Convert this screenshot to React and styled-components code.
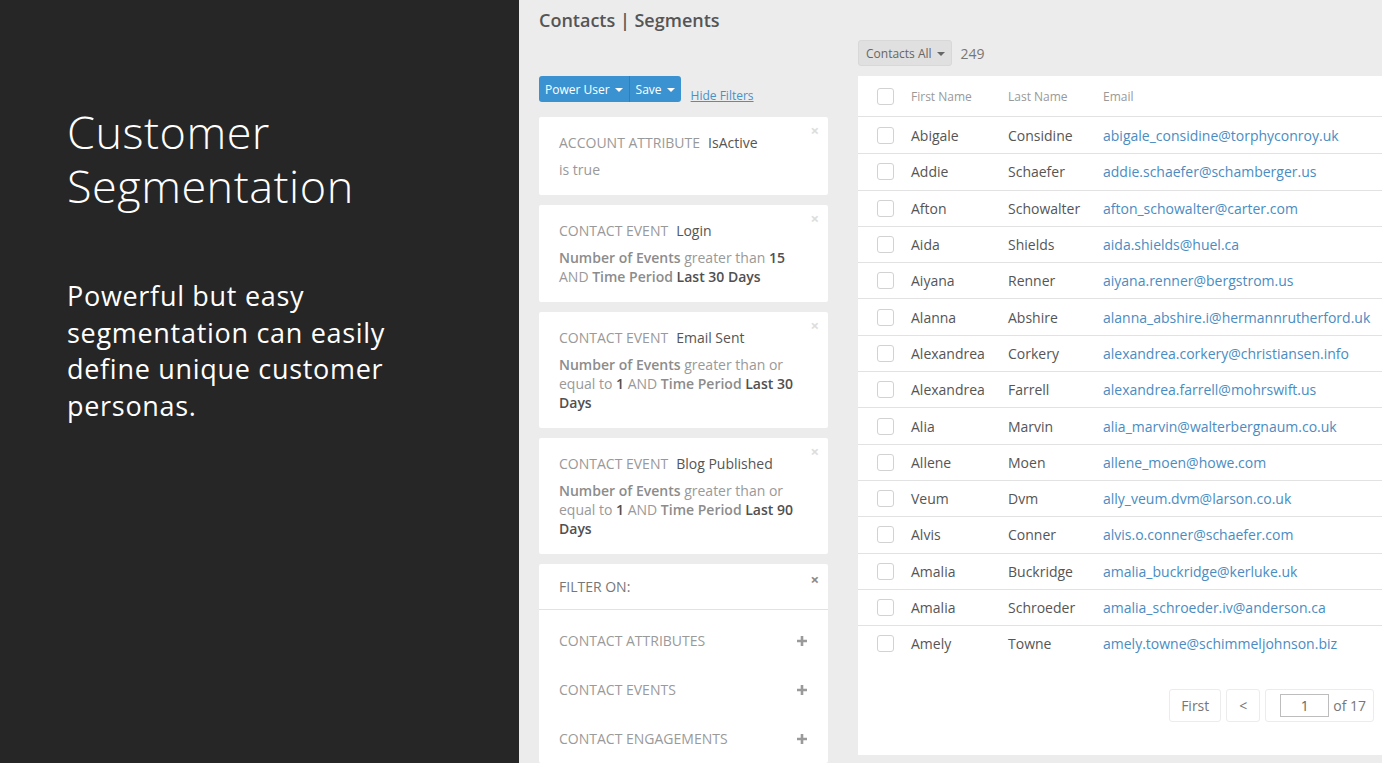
import React from 'react'
import styled, { createGlobalStyle } from 'styled-components'

const GlobalStyle = createGlobalStyle`
  html, body {
    margin: 0;
    padding: 0;
    overflow: hidden;
  }
  body {
    font-family: "Open Sans", "Noto Sans", sans-serif;
  }
  * {
    box-sizing: border-box;
  }
`

const conditions = [
  {
    kind: 'ACCOUNT ATTRIBUTE',
    name: 'IsActive',
    body: [['text', 'is true']],
  },
  {
    kind: 'CONTACT EVENT',
    name: 'Login',
    body: [
      ['field', 'Number of Events'],
      ['text', ' greater than '],
      ['value', '15'],
      ['text', ' AND '],
      ['field', 'Time Period'],
      ['text', ' '],
      ['value', 'Last 30 Days'],
    ],
  },
  {
    kind: 'CONTACT EVENT',
    name: 'Email Sent',
    body: [
      ['field', 'Number of Events'],
      ['text', ' greater than or equal to '],
      ['value', '1'],
      ['text', ' AND '],
      ['field', 'Time Period'],
      ['text', ' '],
      ['value', 'Last 30 Days'],
    ],
  },
  {
    kind: 'CONTACT EVENT',
    name: 'Blog Published',
    body: [
      ['field', 'Number of Events'],
      ['text', ' greater than or equal to '],
      ['value', '1'],
      ['text', ' AND '],
      ['field', 'Time Period'],
      ['text', ' '],
      ['value', 'Last 90 Days'],
    ],
  },
]

const filterGroups = ['CONTACT ATTRIBUTES', 'CONTACT EVENTS', 'CONTACT ENGAGEMENTS']

const contacts = [
  ['Abigale', 'Considine', 'abigale_considine@torphyconroy.uk'],
  ['Addie', 'Schaefer', 'addie.schaefer@schamberger.us'],
  ['Afton', 'Schowalter', 'afton_schowalter@carter.com'],
  ['Aida', 'Shields', 'aida.shields@huel.ca'],
  ['Aiyana', 'Renner', 'aiyana.renner@bergstrom.us'],
  ['Alanna', 'Abshire', 'alanna_abshire.i@hermannrutherford.uk'],
  ['Alexandrea', 'Corkery', 'alexandrea.corkery@christiansen.info'],
  ['Alexandrea', 'Farrell', 'alexandrea.farrell@mohrswift.us'],
  ['Alia', 'Marvin', 'alia_marvin@walterbergnaum.co.uk'],
  ['Allene', 'Moen', 'allene_moen@howe.com'],
  ['Veum', 'Dvm', 'ally_veum.dvm@larson.co.uk'],
  ['Alvis', 'Conner', 'alvis.o.conner@schaefer.com'],
  ['Amalia', 'Buckridge', 'amalia_buckridge@kerluke.uk'],
  ['Amalia', 'Schroeder', 'amalia_schroeder.iv@anderson.ca'],
  ['Amely', 'Towne', 'amely.towne@schimmeljohnson.biz'],
]

const App = () => {
  return (
    <>
      <GlobalStyle />
      <Page>
        <Slide>
          <SlideTitle>Customer Segmentation</SlideTitle>
          <SlideText>
            Powerful but easy segmentation can easily define unique customer personas.
          </SlideText>
        </Slide>

        <Workspace>
          <PageTitle>Contacts | Segments</PageTitle>
          <Columns>
            <FilterColumn>
              <Toolbar>
                <ButtonGroup>
                  <PrimaryButton>
                    Power User <Caret />
                  </PrimaryButton>
                  <PrimaryButton $divided>
                    Save <Caret />
                  </PrimaryButton>
                </ButtonGroup>
                <TextLink>Hide Filters</TextLink>
              </Toolbar>

              {conditions.map((c, i) => (
                <ConditionCard key={i}>
                  <CloseMark>×</CloseMark>
                  <ConditionTitle>
                    {c.kind}
                    <ConditionName>{c.name}</ConditionName>
                  </ConditionTitle>
                  <div>
                    {c.body.map(([type, text], j) => (
                      <Part key={j} $type={type}>
                        {text}
                      </Part>
                    ))}
                  </div>
                </ConditionCard>
              ))}

              <FilterCard>
                <FilterHeader>
                  FILTER ON:
                  <CloseMark $dark>×</CloseMark>
                </FilterHeader>
                <FilterList>
                  {filterGroups.map((g) => (
                    <FilterRow key={g}>
                      {g}
                      <PlusIcon viewBox="0 0 12 12">
                        <path d="M6 1v10M1 6h10" />
                      </PlusIcon>
                    </FilterRow>
                  ))}
                </FilterList>
              </FilterCard>
            </FilterColumn>

            <ResultsColumn>
              <ResultsBar>
                <GreyButton>
                  Contacts All <Caret $dark />
                </GreyButton>
                <Count>249</Count>
              </ResultsBar>

              <TableCard>
                <HeaderRow>
                  <Checkbox />
                  <span>First Name</span>
                  <span>Last Name</span>
                  <span>Email</span>
                </HeaderRow>
                {contacts.map(([first, last, email], i) => (
                  <DataRow key={i} $first={i === 0}>
                    <Checkbox />
                    <span>{first}</span>
                    <span>{last}</span>
                    <EmailLink>{email}</EmailLink>
                  </DataRow>
                ))}

                <Pager>
                  <PagerButton>First</PagerButton>
                  <PagerButton $narrow>&lt;</PagerButton>
                  <PagerBox>
                    <PageInput defaultValue="1" />
                    <span>of 17</span>
                  </PagerBox>
                </Pager>
              </TableCard>
            </ResultsColumn>
          </Columns>
        </Workspace>
      </Page>
    </>
  )
}

export default App


const Page = styled.div`
  display: flex;
  width: 100vw;
  height: 100vh;
  overflow: hidden;
`

const Slide = styled.div`
  flex: none;
  width: 519px;
  background: #262626;
  color: #ffffff;
  padding: 105px 0 0 67px;
  font-family: "Open Sans", "Noto Sans", sans-serif;
`

const SlideTitle = styled.h1`
  margin: 0;
  width: 360px;
  font-size: 45px;
  line-height: 54px;
  font-weight: 300;
  letter-spacing: 0.5px;
`

const SlideText = styled.p`
  margin: 65px 0 0;
  width: 350px;
  font-size: 27px;
  line-height: 36.5px;
  font-weight: 400;
  letter-spacing: 0.7px;
`

const Workspace = styled.div`
  flex: 1;
  background: #ececec;
  padding: 8px 0 0 20px;
  overflow: hidden;
`

const PageTitle = styled.h2`
  margin: 0;
  font-size: 18px;
  line-height: 24px;
  font-weight: 600;
  color: #555555;
`

const Columns = styled.div`
  display: flex;
  align-items: flex-start;
  gap: 30px;
  margin-top: 8px;
`

const FilterColumn = styled.div`
  flex: none;
  width: 289px;
  padding-top: 36px;
  display: flex;
  flex-direction: column;
  gap: 10px;
`

const Toolbar = styled.div`
  display: flex;
  align-items: flex-end;
  gap: 10px;
  margin-bottom: 5px;
`

const ButtonGroup = styled.div`
  display: flex;
  border-radius: 3px;
  overflow: hidden;
`

const PrimaryButton = styled.button`
  display: flex;
  align-items: center;
  height: 26px;
  padding: 0 6px;
  border: none;
  border-left: ${({ $divided }) => ($divided ? '1px solid #2f7fb8' : 'none')};
  background: #3a93d0;
  color: #ffffff;
  font-family: inherit;
  font-size: 12px;
  cursor: pointer;
`

const Caret = styled.span`
  display: inline-block;
  margin-left: 5px;
  margin-top: 1px;
  border-left: 4px solid transparent;
  border-right: 4px solid transparent;
  border-top: 4px solid ${({ $dark }) => ($dark ? '#666666' : '#ffffff')};
`

const TextLink = styled.a`
  font-size: 12px;
  color: #4a90c8;
  text-decoration: underline;
  line-height: 18px;
  margin-bottom: -3px;
  cursor: pointer;
`

const ConditionCard = styled.div`
  position: relative;
  background: #ffffff;
  border-radius: 2px;
  padding: 16px 20px 16px;
  font-size: 14px;
  line-height: 19px;
  color: #999999;
`

const CloseMark = styled.span`
  position: absolute;
  top: ${({ $dark }) => ($dark ? '7px' : '5px')};
  right: 9px;
  font-size: 15px;
  font-weight: 700;
  line-height: 16px;
  color: ${({ $dark }) => ($dark ? '#8a8a8a' : '#dddddd')};
`

const ConditionTitle = styled.div`
  margin-bottom: 8px;
`

const ConditionName = styled.span`
  margin-left: 8px;
  color: #555555;
`

const Part = styled.span`
  font-weight: ${({ $type }) => ($type === 'text' ? 400 : 600)};
  color: ${({ $type }) =>
    $type === 'field' ? '#8c8c8c' : $type === 'value' ? '#505050' : '#999999'};
  white-space: pre-wrap;
`

const FilterCard = styled.div`
  background: #ffffff;
  border-radius: 2px;
  font-size: 14px;
  line-height: 19px;
`

const FilterHeader = styled.div`
  position: relative;
  padding: 13px 20px;
  color: #777777;
  border-bottom: 1px solid #e2e2e2;
`

const FilterList = styled.div`
  padding-top: 6px;
`

const FilterRow = styled.div`
  display: flex;
  align-items: center;
  justify-content: space-between;
  height: 49px;
  padding: 0 20px;
  color: #9a9a9a;
`

const PlusIcon = styled.svg`
  width: 12px;
  height: 12px;
  stroke: #9a9a9a;
  stroke-width: 2.6;
  fill: none;
`

const ResultsColumn = styled.div`
  flex: none;
  width: 540px;
`

const ResultsBar = styled.div`
  display: flex;
  align-items: center;
  gap: 9px;
  height: 26px;
  margin-bottom: 10px;
`

const GreyButton = styled.button`
  display: flex;
  align-items: center;
  height: 26px;
  padding: 0 6px 0 7px;
  border: 1px solid #d8d8d8;
  border-radius: 3px;
  background: #e0e0e0;
  color: #666666;
  font-family: inherit;
  font-size: 12px;
`

const Count = styled.span`
  font-size: 14px;
  color: #777777;
`

const TableCard = styled.div`
  background: #ffffff;
  height: 679px;
  font-size: 14px;
  color: #555555;
`

const rowGrid = `
  display: grid;
  grid-template-columns: 34px 97px 95px 1fr;
  align-items: center;
  padding-left: 19px;
  white-space: nowrap;
`

const HeaderRow = styled.div`
  ${rowGrid}
  height: 41px;
  border-bottom: 1px solid #e2e2e2;
  font-size: 12px;
  color: #999999;
`

const DataRow = styled.div`
  ${rowGrid}
  height: 36.3px;
  border-top: ${({ $first }) => ($first ? 'none' : '1px solid #e2e2e2')};
`

const Checkbox = styled.span`
  display: block;
  width: 17px;
  height: 17px;
  border: 1px solid #d2d2d2;
  border-radius: 3px;
  background: #ffffff;
`

const EmailLink = styled.a`
  color: #4a8cc2;
  cursor: pointer;
`

const Pager = styled.div`
  display: flex;
  justify-content: flex-end;
  gap: 5px;
  margin-top: 28px;
  padding-right: 24px;
  color: #777777;
`

const PagerButton = styled.div`
  display: flex;
  align-items: center;
  justify-content: center;
  height: 33px;
  width: ${({ $narrow }) => ($narrow ? '34px' : '52px')};
  border: 1px solid #ececec;
  border-radius: 3px;
`

const PagerBox = styled.div`
  display: flex;
  align-items: center;
  gap: 4px;
  height: 33px;
  padding: 0 7px 0 14px;
  border: 1px solid #ececec;
  border-radius: 3px;
`

const PageInput = styled.input`
  width: 49px;
  height: 23px;
  border: 1px solid #bdbdbd;
  text-align: center;
  font-family: inherit;
  font-size: 14px;
  color: #666666;
  padding: 0;
`
